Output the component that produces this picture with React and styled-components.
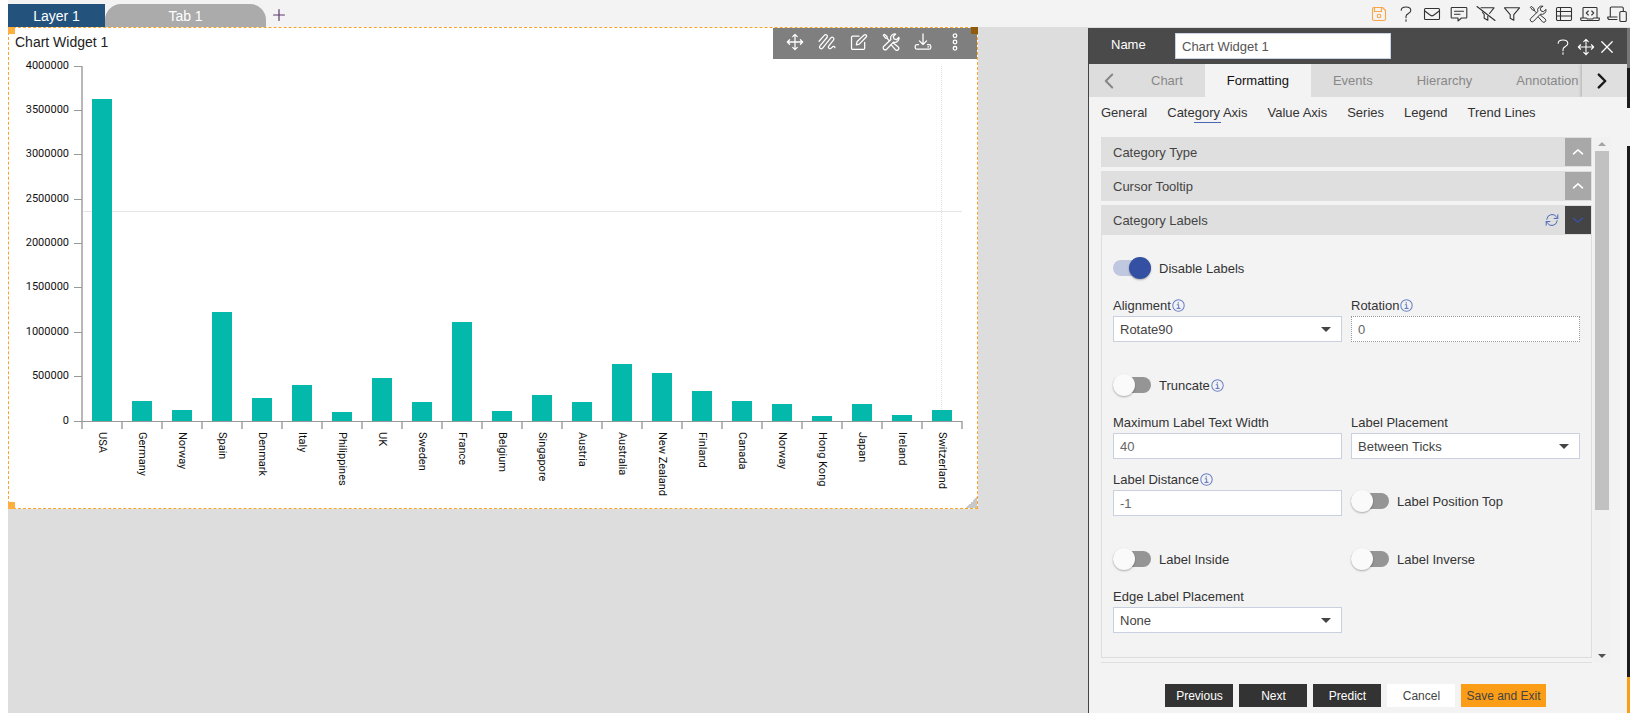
import React, { useState } from 'react';
import styled, { createGlobalStyle } from 'styled-components';

const chartData = [
  { country: 'USA', value: 3628000 },
  { country: 'Germany', value: 220000 },
  { country: 'Norway', value: 118000 },
  { country: 'Spain', value: 1217000 },
  { country: 'Denmark', value: 248000 },
  { country: 'Italy', value: 405000 },
  { country: 'Philippines', value: 98000 },
  { country: 'UK', value: 484000 },
  { country: 'Sweden', value: 208000 },
  { country: 'France', value: 1110000 },
  { country: 'Belgium', value: 107000 },
  { country: 'Singapore', value: 287000 },
  { country: 'Austria', value: 203000 },
  { country: 'Australia', value: 631000 },
  { country: 'New Zealand', value: 535000 },
  { country: 'Finland', value: 332000 },
  { country: 'Canada', value: 225000 },
  { country: 'Norway', value: 191000 },
  { country: 'Hong Kong', value: 51000 },
  { country: 'Japan', value: 191000 },
  { country: 'Ireland', value: 62000 },
  { country: 'Switzerland', value: 118000 },
];

// 20x20 line icons
const icons = {
  save: (
    <>
      <path d="M3.5 5A1.5 1.5 0 0 1 5 3.5h8.5l3 3V15a1.5 1.5 0 0 1-1.5 1.5H5A1.5 1.5 0 0 1 3.5 15z" />
      <path d="M5.5 3.5v4h7v-4" />
      <circle cx="10" cy="12" r="1.8" />
    </>
  ),
  help: (
    <>
      <path d="M5.2 6.3C5.2 4 7.4 3 10 3s4.8 1.2 4.8 3.6c0 3.2-4.8 2.6-4.8 5.8v1.3" />
      <path d="M10 15.8v1.4" />
    </>
  ),
  mail: (
    <>
      <rect x="2.5" y="4.5" width="15" height="11" rx="1" />
      <path d="M2.8 7l5.6 4.2a2.6 2.6 0 0 0 3.2 0L17.2 7" />
    </>
  ),
  comment: (
    <>
      <path d="M3 3.5h14a.8.8 0 0 1 .8.8v8.9a.8.8 0 0 1-.8.8h-4.5L9 17v-3H3a.8.8 0 0 1-.8-.8V4.3a.8.8 0 0 1 .8-.8z" />
      <path d="M5.5 7.2h9M5.5 10.2h5.5" />
    </>
  ),
  filterOff: (
    <>
      <path d="M5 3.8h13l-4.500 5.700M11.800 12v4.200l-3.600-2v-3.700L6.300 8" />
      <path d="M1 2.5l18 14" />
    </>
  ),
  filter: <path d="M2.5 3.8h15l-5.700 6.900v5.500l-3.600-2v-3.500z" />,
  tools: (
    <>
      <path d="M15.2 1.2a4.600 4.600 0 0 0-5.300 6.100L2 14.800A2.200 2.200 0 0 0 5.200 18l7.500-7.900a4.600 4.600 0 0 0 6.100-5.300l-2.700 2.700-2.700-.9-.9-2.700z" />
      <path d="M8.300 8.700L5.900 6.200 5.600 4 2.500 1.500l-1 1L4 5.600l2.200.3" />
      <path d="M12.600 11.200l5.500 4.400a2.200 2.200 0 0 1-3.100 3.100l-4.500-5.200" />
    </>
  ),
  table: (
    <>
      <rect x="2.5" y="3.5" width="15" height="13" rx="1.2" />
      <path d="M2.5 7.5h15M2.5 12h15M6.500 3.500v13" />
    </>
  ),
  laptopCode: (
    <>
      <path d="M3 13.5V4.3a.8.8 0 0 1 .8-.8h12.400a.8.8 0 0 1 .8.8v9.200" />
      <path d="M.7 14h5.800l.8 1h5.400l.8-1h5.800v1.200a1.300 1.300 0 0 1-1.300 1.300H2a1.300 1.300 0 0 1-1.300-1.300z" />
      <path d="M8.300 7L6.300 9l2 2M11.700 7l2 2-2 2" />
    </>
  ),
  devices: (
    <>
      <path d="M3.300 12.500V4.300A1.300 1.300 0 0 1 4.600 3H15a1.300 1.300 0 0 1 1.300 1.300v2.700M.7 13h9.300M.7 13v.5a2 2 0 0 0 2 2H10" />
      <rect x="12.800" y="7.5" width="6.500" height="10" rx="1.300" />
    </>
  ),
  move: (
    <path d="M10 1.500v17M1.500 10h17M7.500 4L10 1.500 12.500 4M7.500 16l2.500 2.500 2.500-2.500M4 7.500L1.500 10 4 12.500M16 7.500l2.500 2.500-2.500 2.500" />
  ),
  scribble: (
    <path d="M1.200 9.200L7 2.600a1.900 1.900 0 0 1 3 2.400L2 14.600a1.900 1.900 0 0 0 2.900 2.400L14.500 5.200a1.900 1.900 0 0 1 2.900 2.400L12 14.400a1.800 1.800 0 0 0 2.700 2.400l1.300-1.300a1.600 1.600 0 0 1 2.800.7" />
  ),
  edit: (
    <>
      <path d="M10 3.500H3A1.300 1.300 0 0 0 1.700 4.800V17A1.300 1.300 0 0 0 3 18.300h12a1.300 1.300 0 0 0 1.300-1.300v-6.500" />
      <path d="M7 13.200l.8-3.400 7.800-7.600a1.600 1.600 0 0 1 2.400 2.300l-7.700 7.800z" />
    </>
  ),
  download: (
    <>
      <path d="M10 1v11.500M6 8.800l4 3.900 4-3.900" />
      <path d="M5 13H3.300a2 2 0 0 0-2 2v1a2 2 0 0 0 2 2h13.400a2 2 0 0 0 2-2v-1a2 2 0 0 0-2-2H15" />
      <path d="M15.500 15.500h.8" />
    </>
  ),
  more: (
    <>
      <circle cx="10" cy="3" r="2" />
      <circle cx="10" cy="10" r="2" />
      <circle cx="10" cy="17" r="2" />
    </>
  ),
  close: <path d="M3.500 3.500l13 13M16.500 3.500l-13 13" />,
  left: <path d="M14 2l-8 8 8 8" />,
  right: <path d="M6 2l8 8-8 8" />,
  up: <path d="M2.500 13l7.500-6.500 7.500 6.500" />,
  down: <path d="M2.500 7l7.500 6.500L17.500 7" />,
  plus: <path d="M10 1v18M1 10h18" />,
  refresh: (
    <>
      <path d="M2.500 9a7.700 7.700 0 0 1 14-3.500l1.700 2M17.500 11a7.700 7.700 0 0 1-14 3.500l-1.700-2" />
      <path d="M18.300 2.500v5.300H13M1.700 17.500v-5.300H7" />
    </>
  ),
  info: (
    <>
      <circle cx="10" cy="10" r="8.800" />
      <path d="M8 8.800h2.200v5.400M7.600 14.400h5M9.600 5.200v1.400" />
    </>
  ),
};

const Icon = ({ name, size = 20, weight = 1.1 }) => (
  <StIcon
    viewBox="0 0 20 20"
    width={size}
    height={size}
    fill="none"
    stroke="currentColor"
    strokeWidth={weight}
    strokeLinecap="round"
    strokeLinejoin="round"
    aria-hidden="true"
  >
    {icons[name]}
  </StIcon>
);

const Chart = () => {
  const left = 73;
  const top = 7;
  const bottom = 362;
  const step = 40;
  const right = left + step * chartData.length;
  const max = 4000000;
  const ticks = [0, 1, 2, 3, 4, 5, 6, 7, 8].map((n) => n * 500000);
  const toY = (value) => Math.floor(bottom - ((bottom - top) * value) / max);

  return (
    <StChart viewBox="0 0 968 449" role="img" aria-label="Chart Widget 1">
      <line x1={left} x2={right} y1="152.5" y2="152.5" className="cursor" />
      <line x1="932.5" x2="932.5" y1={top} y2={bottom} className="cursor dotted" />
      {chartData.map(({ country, value }, i) => (
        <g key={i}>
          <rect
            x={left + step * i + 10}
            y={toY(value)}
            width="20"
            height={bottom - toY(value)}
            className="bar"
          />
          <rect x={left + step * (i + 1) - 1} y={bottom} width="2" height="8" className="axis" />
          <text transform={`translate(${left + step * i + 17} 373) rotate(90)`}>{country}</text>
        </g>
      ))}
      <rect x={left - 1} y={top} width="2" height={bottom - top + 8} className="axis" />
      <rect x={left} y={bottom} width={right - left} height="1" className="tick" />
      {ticks.map((tick) => (
        <g key={tick}>
          <rect x={left - 8} y={toY(tick)} width="8" height="1" className="tick" />
          <text x="60" y={toY(tick) + 3} textAnchor="end">
            {tick}
          </text>
        </g>
      ))}
    </StChart>
  );
};

const Toggle = ({ id, label, info, defaultChecked }) => (
  <StToggle>
    <input type="checkbox" role="switch" id={id} defaultChecked={defaultChecked} />
    <label htmlFor={id}>{label}</label>
    {info && <StInfo><Icon name="info" size={13} weight={1.6} /></StInfo>}
  </StToggle>
);

const Field = ({ id, label, info, options, value, disabled }) => (
  <StField>
    <div className="field_label">
      <label htmlFor={id}>{label}</label>
      {info && <StInfo><Icon name="info" size={13} weight={1.6} /></StInfo>}
    </div>
    {options ? (
      <StSelect>
        <select id={id} defaultValue={options[0]}>
          {options.map((option) => (
            <option key={option}>{option}</option>
          ))}
        </select>
        <svg viewBox="0 0 10 5" width="10" height="5" aria-hidden="true">
          <path d="M0 0h10L5 5z" />
        </svg>
      </StSelect>
    ) : (
      <StInput type="text" id={id} defaultValue={value} disabled={disabled} />
    )}
  </StField>
);

const AccordionHeader = ({ title, open, refresh, onClick }) => (
  <StAccordionHeader $open={open}>
    <h3>{title}</h3>
    {refresh && (
      <button type="button" className="refresh" aria-label="Refresh">
        <Icon name="refresh" size={14} weight={1.4} />
      </button>
    )}
    <button type="button" className="toggle" aria-label="Expand" onClick={onClick}>
      <Icon name={open ? 'down' : 'up'} size={12} weight={open ? 2 : 2.6} />
    </button>
  </StAccordionHeader>
);

const App = () => {
  const [tab, setTab] = useState('Formatting');
  const [section, setSection] = useState('Category Axis');
  const [open, setOpen] = useState(true);

  const menu = ['help', 'mail', 'comment', 'filterOff', 'filter', 'tools', 'table', 'laptopCode', 'devices'];
  const widgetTools = ['move', 'scribble', 'edit', 'tools', 'download', 'more'];
  const tabs = ['Chart', 'Formatting', 'Events', 'Hierarchy', 'Annotation'];
  const sections = ['General', 'Category Axis', 'Value Axis', 'Series', 'Legend', 'Trend Lines'];

  return (
    <>
      <GlobalStyle />
      <StPage>
        <StTopBar>
          <StLayer type="button">Layer 1</StLayer>
          <StTab type="button">Tab 1</StTab>
          <StAdd type="button" aria-label="Add tab">
            <Icon name="plus" size={12} weight={2} />
          </StAdd>
          <StMenu>
            <StIconButton type="button" aria-label="save" $color="#fba544">
              <Icon name="save" />
            </StIconButton>
            {menu.map((name) => (
              <StIconButton key={name} type="button" aria-label={name} $color="#333">
                <Icon name={name} size={name === 'tools' ? 18 : 20} />
              </StIconButton>
            ))}
          </StMenu>
        </StTopBar>

        <StMain>
          <StCanvas>
            <StWidget>
              <StWidgetHeader>
                <h2>Chart Widget 1</h2>
                <StWidgetTools>
                  {widgetTools.map((name) => (
                    <StIconButton key={name} type="button" aria-label={name} $color="#fff">
                      <Icon name={name} size={18} weight={1.4} />
                    </StIconButton>
                  ))}
                </StWidgetTools>
              </StWidgetHeader>
              <Chart />
              <StHandle $at="tl" />
              <StHandle $at="tr" />
              <StHandle $at="bl" />
              <StResize />
            </StWidget>
          </StCanvas>

          <StPanel>
            <StPanelHeader>
              <label htmlFor="widget-name">Name</label>
              <input type="text" id="widget-name" defaultValue="Chart Widget 1" />
              <div className="actions">
                <StIconButton type="button" aria-label="help" $color="#fff">
                  <Icon name="help" />
                </StIconButton>
                <StIconButton type="button" aria-label="move" $color="#fff">
                  <Icon name="move" size={18} weight={1.2} />
                </StIconButton>
                <StIconButton type="button" aria-label="close" $color="#fff">
                  <Icon name="close" size={16} weight={1.6} />
                </StIconButton>
              </div>
            </StPanelHeader>

            <StTabs>
              <button type="button" className="prev" aria-label="Previous tabs">
                <Icon name="left" size={16} weight={2.6} />
              </button>
              <div className="tabs_list">
                {tabs.map((name) => (
                  <StTabItem key={name} type="button" $active={name === tab} onClick={() => setTab(name)}>
                    {name}
                  </StTabItem>
                ))}
              </div>
              <button type="button" className="next" aria-label="Next tabs">
                <Icon name="right" size={16} weight={3} />
              </button>
            </StTabs>

            <StSections>
              {sections.map((name) => (
                <StSection key={name} type="button" $active={name === section} onClick={() => setSection(name)}>
                  {name}
                </StSection>
              ))}
            </StSections>

            <StScrollArea>
              <StAccordion>
                <AccordionHeader title="Category Type" />
                <AccordionHeader title="Cursor Tooltip" />
                <div>
                  <AccordionHeader title="Category Labels" open={open} refresh onClick={() => setOpen(!open)} />
                  {open && (
                    <StForm>
                      <Toggle id="disable-labels" label="Disable Labels" defaultChecked />
                      <StRow>
                        <Field id="alignment" label="Alignment" info options={['Rotate90']} />
                        <Field id="rotation" label="Rotation" info value="0" disabled />
                      </StRow>
                      <StRow $spaced>
                        <Toggle id="truncate" label="Truncate" info />
                      </StRow>
                      <StRow>
                        <Field id="max-width" label="Maximum Label Text Width" value="40" />
                        <Field id="placement" label="Label Placement" options={['Between Ticks']} />
                      </StRow>
                      <StRow $tight>
                        <Field id="distance" label="Label Distance" info value="-1" />
                        <Toggle id="position-top" label="Label Position Top" />
                      </StRow>
                      <StRow $spaced>
                        <Toggle id="inside" label="Label Inside" />
                        <Toggle id="inverse" label="Label Inverse" />
                      </StRow>
                      <StRow>
                        <Field id="edge" label="Edge Label Placement" options={['None']} />
                      </StRow>
                    </StForm>
                  )}
                </div>
                <AccordionHeader />
              </StAccordion>
              <StScrollBar>
                <StArrow viewBox="0 0 8 4" $color="#a3a3a3">
                  <path d="M0 4h8L4 0z" />
                </StArrow>
                <div className="track">
                  <div className="thumb" />
                </div>
                <StArrow viewBox="0 0 8 4" $color="#505050">
                  <path d="M0 0h8L4 4z" />
                </StArrow>
              </StScrollBar>
            </StScrollArea>

            <StFooter>
              <StButton type="button">Previous</StButton>
              <StButton type="button">Next</StButton>
              <StButton type="button">Predict</StButton>
              <StButton type="button" $variant="light">Cancel</StButton>
              <StButton type="button" $variant="accent">Save and Exit</StButton>
            </StFooter>
          </StPanel>

          <StEdge>
            <StEdgeItem $height={40} $color="#777" />
            <StEdgeItem $height={40} $color="#1c1c1c" />
            <StEdgeItem $height={38} $color="#f3f3f3" />
            <StEdgeItem $grow $color="#1c1c1c" />
            <StEdgeItem $height={36} $color="#fb9d17" />
          </StEdge>
        </StMain>
      </StPage>
    </>
  );
};

export default App;

const GlobalStyle = createGlobalStyle`
  * {
    box-sizing: border-box;
  }
  body {
    margin: 0;
    background: #fff;
    font-family: 'Liberation Sans', Arial, sans-serif;
    font-size: 13px;
    color: #333;
  }
  button, input, select {
    margin: 0;
    font: inherit;
    border-radius: 0;
  }
  button {
    padding: 0;
    border: none;
    background: none;
    cursor: pointer;
  }
  h2, h3 {
    margin: 0;
    font-weight: normal;
  }
`;

const StIcon = styled.svg`
  display: block;
  flex: none;
`;

const StPage = styled.div`
  display: flex;
  flex-direction: column;
  height: 100vh;
  padding-left: 8px;
`;

const StTopBar = styled.header`
  display: flex;
  align-items: flex-end;
  height: 27px;
  background: #f3f3f3;
  flex: none;
`;

const StLayer = styled.button`
  width: 97px;
  height: 23px;
  background: #23527c;
  color: #fff;
  font-size: 14px;
`;

const StTab = styled.button`
  width: 161px;
  height: 23px;
  border-radius: 16px 16px 0 0;
  background: #ababab;
  color: #fff;
  font-size: 14px;
`;

const StAdd = styled.button`
  display: flex;
  align-items: center;
  height: 24px;
  margin-left: 7px;
  color: #5b3a6e;
`;

const StMenu = styled.nav`
  display: flex;
  align-items: center;
  justify-content: space-between;
  width: 261px;
  height: 100%;
  margin-left: auto;
  padding-right: 3px;
`;

const StIconButton = styled.button`
  display: flex;
  align-items: center;
  justify-content: center;
  color: ${({ $color }) => $color};
`;

const StMain = styled.main`
  display: flex;
  flex: 1;
  min-height: 0;
  background: #ddd;
`;

const StCanvas = styled.section`
  flex: 1;
  min-width: 0;
  padding-right: 110px;
`;

const StWidget = styled.article`
  position: relative;
  border: 1px dashed #fba328;
  background: #fff;
`;

const StWidgetHeader = styled.div`
  display: flex;
  justify-content: space-between;
  height: 31px;
  h2 {
    padding: 6px;
    font-size: 14px;
    line-height: 16px;
    color: #222;
  }
`;

const StWidgetTools = styled.div`
  display: flex;
  align-items: center;
  gap: 14px;
  padding: 0 13px 3px;
  background: #7f7f7f;
`;

const StHandle = styled.span`
  position: absolute;
  width: 7px;
  height: 7px;
  background: ${({ $at }) => ($at === 'tr' ? '#8f5a0c' : '#fdb03f')};
  ${({ $at }) => ($at[0] === 't' ? 'top: -1px;' : 'bottom: -1px;')}
  ${({ $at }) => ($at[1] === 'l' ? 'left: -1px;' : 'right: -1px;')}
`;

const StResize = styled.span`
  position: absolute;
  right: 0;
  bottom: 0;
  width: 11px;
  height: 11px;
  background: linear-gradient(135deg, transparent 50%, #c8c8c8 50%);
`;

const StChart = styled.svg`
  display: block;
  width: 100%;
  height: auto;
  text {
    font-family: Roboto, sans-serif;
    font-size: 11px;
    fill: #111;
  }
  .bar {
    fill: #04b8ac;
  }
  .axis {
    fill: #b8b8b8;
  }
  .tick {
    fill: #999;
  }
  .cursor {
    stroke: #e6e6e6;
  }
  .dotted {
    stroke: #ddd;
    stroke-dasharray: 1 1;
  }
`;

const StPanel = styled.aside`
  display: flex;
  flex-direction: column;
  width: 539px;
  margin-top: 1px;
  border-left: 1px solid #444;
  background: #f3f3f3;
`;

const StPanelHeader = styled.div`
  display: flex;
  align-items: center;
  height: 36px;
  padding: 0 12px 0 22px;
  background: #4a4a4a;
  color: #fff;
  flex: none;
  label {
    width: 64px;
    padding-bottom: 4px;
  }
  input {
    width: 216px;
    height: 26px;
    padding: 0 6px;
    border: 1px solid #c9d1e4;
    background: #fff;
    color: #555;
  }
  .actions {
    display: flex;
    align-items: center;
    gap: 4px;
    height: 36px;
    margin-left: auto;
    padding-top: 2px;
  }
`;

const StTabs = styled.nav`
  display: flex;
  height: 33px;
  background: #ddd;
  flex: none;
  overflow: hidden;
  .tabs_list {
    display: flex;
    flex: 1;
    min-width: 0;
    overflow: hidden;
  }
  .prev,
  .next {
    display: flex;
    align-items: center;
    justify-content: center;
    flex: none;
    width: 40px;
    color: #888;
  }
  .next {
    width: 45px;
    padding-right: 6px;
    background: #dfdfdf;
    box-shadow: -1px 0 3px rgba(0, 0, 0, 0.2);
    color: #1a1a1a;
  }
`;

const StTabItem = styled.button`
  flex: none;
  padding: 0 22px;
  background: ${({ $active }) => ($active ? '#f3f3f3' : 'none')};
  color: ${({ $active }) => ($active ? '#111' : '#888')};
`;

const StSections = styled.nav`
  display: flex;
  gap: 20px;
  height: 40px;
  padding: 7px 12px;
  flex: none;
`;

const StSection = styled.button`
  display: flex;
  flex-direction: column;
  align-items: center;
  height: 20px;
  line-height: 18px;
  color: #333;
  &::after {
    content: '';
    width: 27px;
    height: 1px;
    background: ${({ $active }) => ($active ? '#4a66b5' : 'none')};
    flex: none;
  }
`;

const StScrollArea = styled.div`
  display: flex;
  flex: 1;
  gap: 1px;
  min-height: 0;
  margin-right: 16px;
  padding-left: 12px;
`;

const StAccordion = styled.div`
  display: flex;
  flex-direction: column;
  flex: 1;
  gap: 4px;
  min-width: 0;
  overflow: hidden;
  & > * {
    flex: none;
  }
`;

const StAccordionHeader = styled.div`
  display: flex;
  align-items: stretch;
  height: 30px;
  padding: 1px 1px 1px 12px;
  background: #dfdfdf;
  h3 {
    flex: 1;
    font-size: 13px;
    line-height: 30px;
    color: #444;
  }
  button {
    display: flex;
    align-items: center;
    justify-content: center;
  }
  .refresh {
    width: 27px;
    color: #4a66b5;
  }
  .toggle {
    width: 26px;
    background: ${({ $open }) => ($open ? '#444' : '#a8a8a8')};
    color: ${({ $open }) => ($open ? '#3a53b5' : '#fff')};
  }
`;

const StForm = styled.form`
  padding: 18px 11px 24px;
  border: 1px solid #ddd;
  border-top: none;
`;

const StRow = styled.div`
  display: grid;
  grid-template-columns: 1fr 1fr;
  align-items: end;
  gap: 9px;
  margin-top: ${({ $spaced, $tight }) => {
    if ($spaced) return '28px';
    return $tight ? '12px' : '14px';
  }};
`;

const StToggle = styled.div`
  display: flex;
  align-items: center;
  height: 30px;
  input {
    appearance: none;
    display: grid;
    align-items: center;
    width: 38px;
    height: 22px;
    margin-right: 8px;
    cursor: pointer;
  }
  input::before {
    content: '';
    grid-area: 1 / 1;
    height: 16px;
    border-radius: 8px;
    background: #959595;
  }
  input::after {
    content: '';
    grid-area: 1 / 1;
    width: 22px;
    height: 22px;
    border-radius: 50%;
    background: #fafafa;
    box-shadow: 0 1px 2px rgba(0, 0, 0, 0.3);
  }
  input:checked::before {
    background: #c0c8e0;
  }
  input:checked::after {
    justify-self: end;
    background: #3450a3;
  }
`;

const StInfo = styled.span`
  display: inline-flex;
  margin-left: 1px;
  color: #6a80c4;
`;

const StField = styled.div`
  display: flex;
  flex-direction: column;
  gap: 3px;
  min-width: 0;
  .field_label {
    display: flex;
    align-items: center;
    height: 16px;
  }
`;

const StInput = styled.input`
  width: 100%;
  height: 26px;
  padding: 0 6px;
  border: 1px solid #c9d1e0;
  background: #fff;
  color: #666;
  &:disabled {
    border: 1px dotted #999;
  }
`;

const StSelect = styled.div`
  position: relative;
  select {
    appearance: none;
    width: 100%;
    height: 26px;
    padding: 0 30px 0 6px;
    border: 1px solid #c9d1e0;
    background: #fff;
    color: #444;
  }
  svg {
    position: absolute;
    top: 11px;
    right: 11px;
    fill: #444;
    pointer-events: none;
  }
`;

const StScrollBar = styled.div`
  display: flex;
  flex-direction: column;
  align-items: center;
  width: 18px;
  background: #f1f1f1;
  .track {
    display: flex;
    flex: 1;
  }
  .thumb {
    width: 14px;
    height: 72%;
    background: #c1c1c1;
  }
`;

const StArrow = styled.svg`
  width: 8px;
  height: 4px;
  margin: 5px 0;
  fill: ${({ $color }) => $color};
`;

const StFooter = styled.footer`
  display: flex;
  justify-content: center;
  gap: 6px;
  padding: 21px 5px 6px 0;
  flex: none;
`;

const StButton = styled.button`
  min-width: 68px;
  height: 23px;
  padding: 0 5px;
  font-size: 12px;
  background: ${({ $variant }) => {
    if ($variant === 'light') return '#fff';
    return $variant === 'accent' ? '#fb9d17' : '#333';
  }};
  color: ${({ $variant }) => ($variant ? '#444' : '#fff')};
`;

const StEdge = styled.div`
  display: flex;
  flex-direction: column;
  width: 3px;
  padding-top: 1px;
`;

const StEdgeItem = styled.span`
  height: ${({ $height }) => ($height ? `${$height}px` : 'auto')};
  flex: ${({ $grow }) => ($grow ? 1 : 'none')};
  background: ${({ $color }) => $color};
`;
